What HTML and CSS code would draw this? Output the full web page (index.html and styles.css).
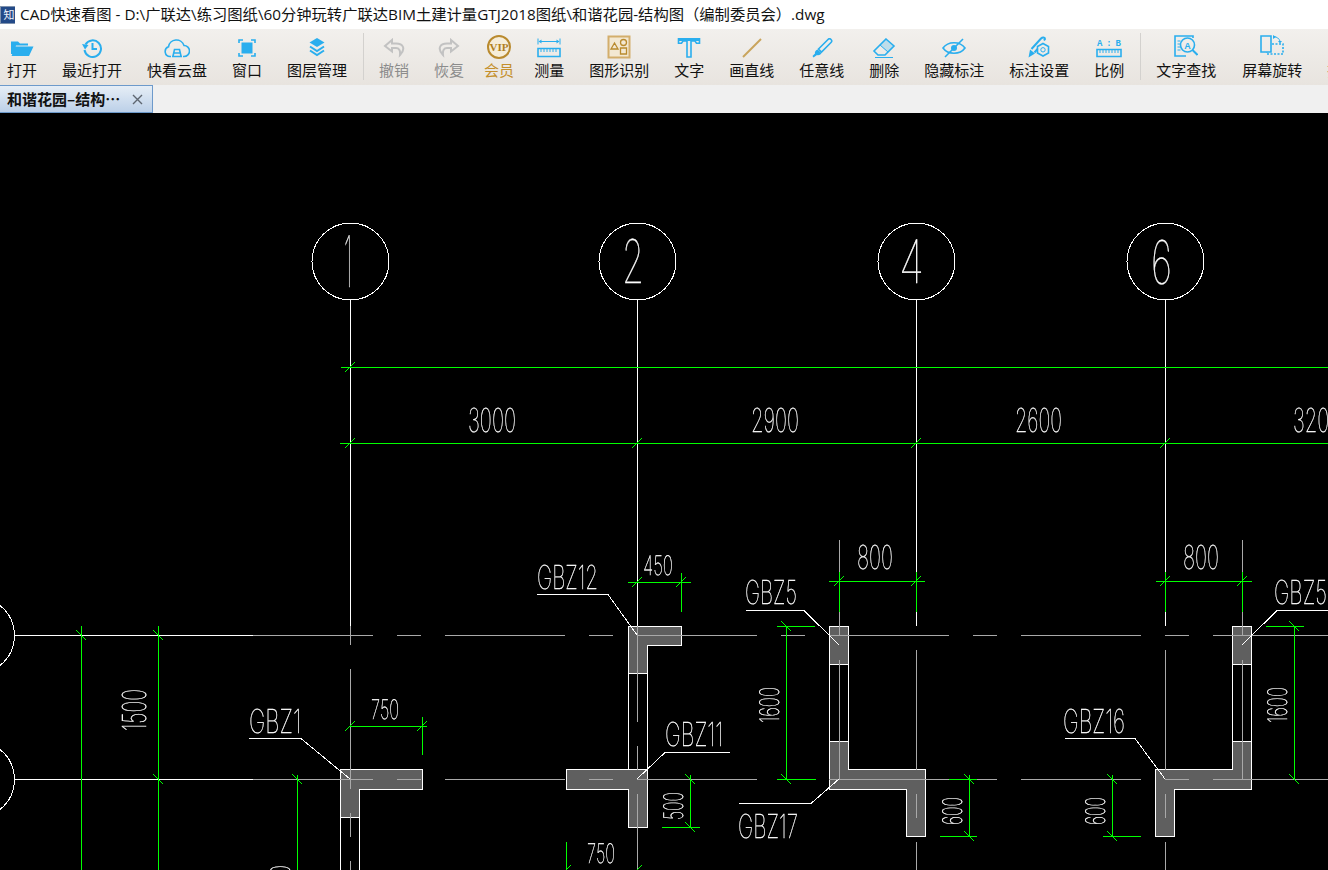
FILE: index.html
```html
<!DOCTYPE html>
<html lang="zh-CN">
<head>
<meta charset="utf-8">
<title>CAD快速看图</title>
<link rel="stylesheet" href="styles.css">
</head>
<body>
<div class="app">
  <header class="titlebar">
    <svg class="logo" viewBox="0 0 15 18"><rect width="15" height="18" fill="#7f92ad"/><rect x="1" y="1" width="14" height="16" fill="#234a88"/><text x="9" y="13" class="logo-t">知</text></svg>
    <span class="title">CAD快速看图 - D:\广联达\练习图纸\60分钟玩转广联达BIM土建计量GTJ2018图纸\和谐花园-结构图（编制委员会）.dwg</span>
  </header>

  <nav class="toolbar">
    <div class="tool">
      <svg class="ic" viewBox="0 0 24 20"><path class="f" d="M1 16V3.500h7l2 2h8v2H6L3 16zM1.500 18l4-9.500h18l-4.500 9.500z"/></svg>
      <span>打开</span>
    </div>
    <div class="tool">
      <svg class="ic" viewBox="0 0 24 20"><path class="s2" d="M5.500 6.500A8.300 8.300 0 1 1 4.500 12"/><path class="f" d="M2 6l6.500 1-3.500 4.500z"/><path class="s2" d="M12.500 5v6h4.500"/></svg>
      <span>最近打开</span>
    </div>
    <div class="tool">
      <svg class="ic wide" viewBox="0 0 26 20"><path class="s15" d="M7 18.500H6A5 5 0 0 1 4.500 8.800 8 8 0 0 1 20 7.500 5.500 5.500 0 0 1 20 18.500h-1"/><path class="s15" d="M8 18.500h10M9 18l1.500-6.500h5L17 18M9.500 15h7"/></svg>
      <span>快看云盘</span>
    </div>
    <div class="tool">
      <svg class="ic" viewBox="0 0 24 20"><path class="s15" d="M4 5V2h4M16 2h4v3M20 15v3h-4M8 18H4v-3"/><rect class="f" x="6.500" y="4.500" width="11" height="11"/></svg>
      <span>窗口</span>
    </div>
    <div class="tool">
      <svg class="ic" viewBox="0 0 24 20"><path class="f" d="M12 0l7.500 4.500L12 9 4.500 4.500z"/><path class="s2" d="M5 8.500L12 13l7-4.500M5 12.500L12 17l7-4.500"/></svg>
      <span>图层管理</span>
    </div>
    <div class="sep"></div>
    <div class="tool off">
      <svg class="ic" viewBox="0 0 24 20"><path class="g" d="M10 2L3 8l7 5.500V10h4c3 0 4.500 2.500 4 7 3-3 4-5 3-8-1-2.500-3.500-3.500-7-3.500h-4z"/></svg>
      <span>撤销</span>
    </div>
    <div class="tool off">
      <svg class="ic" viewBox="0 0 24 20"><path class="g" d="M14 2l7 6-7 5.500V10h-4c-3 0-4.500 2.500-4 7-3-3-4-5-3-8 1-2.500 3.500-3.500 7-3.500h4z"/></svg>
      <span>恢复</span>
    </div>
    <div class="tool vip">
      <svg class="ic big" viewBox="0 0 24 24"><circle cx="12" cy="12" r="11" class="vipc"/><text x="12" y="15.800" class="vipt" textLength="19" lengthAdjust="spacingAndGlyphs">VIP</text></svg>
      <span>会员</span>
    </div>
    <div class="tool tight">
      <svg class="ic" viewBox="0 0 24 20"><path class="s1" d="M1 .5v6M23 .5v6M3 3.500h18"/><path class="f" d="M1.500 3.500l3-2v4zM22.500 3.500l-3-2v4z"/><path class="s15" d="M1 10.500h22v8H1z"/><path class="s1" d="M4 11v3M7 11v3M10 11v3M13 11v3M16 11v3M19 11v3"/></svg>
      <span>测量</span>
    </div>
    <div class="tool">
      <svg class="ic big" viewBox="0 0 24 24"><rect x="1.500" y="1.500" width="21" height="21" class="gbox"/><circle cx="16.500" cy="7.500" r="3" class="gs"/><path class="gs" d="M4 14l3.500-6 3.500 6zM13.500 13h6v6h-6z"/></svg>
      <span>图形识别</span>
    </div>
    <div class="tool">
      <svg class="ic" viewBox="0 0 24 20"><path class="s15" d="M1.500.8h21v4.500h-3L18 3h-4v16h-4V3H6L4.500 5.300h-3z"/><path class="f" d="M2 1h20v2H2z"/></svg>
      <span>文字</span>
    </div>
    <div class="tool">
      <svg class="ic" viewBox="0 0 24 20"><path class="gl" d="M3 19L21 1"/></svg>
      <span>画直线</span>
    </div>
    <div class="tool">
      <svg class="ic" viewBox="0 0 24 20"><path class="s15" d="M8.500 11L18 1.500c1-1 2-1 3 0s1 2 0 3L11.500 14z"/><path class="f" d="M7.500 11.500l4 3.500c-1 2-3 2.500-4.500 2L3.500 19.500 2.500 18l2.500-2.500c-.5-1.500.5-3 2.500-4z"/></svg>
      <span>任意线</span>
    </div>
    <div class="tool">
      <svg class="ic" viewBox="0 0 24 20"><path class="s15" d="M14 1l8 7-9 9H6l-4-4z"/><path class="s1" d="M8 7l8 7M3 19.500h18"/><path class="hatch" d="M14 1l8 7-6 6-8-7z"/></svg>
      <span>删除</span>
    </div>
    <div class="tool">
      <svg class="ic" viewBox="0 0 24 20"><path class="s15" d="M1 10c5-7 17-7 22 0-5 7-17 7-22 0z"/><circle cx="12" cy="10" r="3" class="f"/><path class="s15" d="M3 19L21 1"/></svg>
      <span>隐藏标注</span>
    </div>
    <div class="tool">
      <svg class="ic big" viewBox="0 0 24 24"><path class="f" d="M1.500 22.500L3 14.500l5 4z"/><path class="s2" d="M4.500 14L14 3.500c1.500-1.500 4-1.500 4 .5l-1 1.500M7.500 17.500L10.500 14"/><path class="s15" d="M16 8.500l5.500 3v6.500L16 21l-5.500-3v-6.500z"/><circle cx="16" cy="14.800" r="2.200" class="s1"/></svg>
      <span>标注设置</span>
    </div>
    <div class="tool">
      <svg class="ic wide" viewBox="0 0 26 20"><text x="13" y="7.800" class="abt" textLength="24" lengthAdjust="spacing">A:B</text><path class="s15" d="M1 11.500h24v7H1z"/><path class="s1" d="M4 12v3M7 12v3M10 12v3M13 12v3M16 12v3M19 12v3M22 12v3"/></svg>
      <span>比例</span>
    </div>
    <div class="sep"></div>
    <div class="tool">
      <svg class="ic big" viewBox="0 0 24 24"><path class="s15" d="M19 3V1H1v20h11"/><path class="s1" d="M3.500 6h3M3.500 9h3M3.500 12h3M3.500 15h3"/><circle cx="13.500" cy="10" r="7" class="s15"/><path class="s2" d="M18.500 15l5 5"/><text x="13.500" y="13.500" class="at">A</text></svg>
      <span>文字查找</span>
    </div>
    <div class="tool rot">
      <svg class="ic big" viewBox="0 0 24 24"><path class="s15" d="M1 1h10v16H1z"/><path class="s15 dash" d="M12 9h11v10H7v-2"/><path class="s1" d="M14 1.500c3 .5 5 2 6 4.500"/><path class="f" d="M13 0v4l3-2zM18 6h4l-2 2.500z"/></svg>
      <span>屏幕旋转</span>
    </div>
    <div class="tool">
      <svg class="ic" viewBox="0 0 24 20"></svg>
      <span>批注</span>
    </div>
  </nav>

  <div class="tabbar">
    <div class="tab">
      <span class="tab-name">和谐花园–结构…</span>
      <svg class="tab-x" viewBox="0 0 11 11"><path d="M1 1l9 9M10 1l-9 9"/></svg>
    </div>
  </div>

  <main class="canvas">
    <svg class="drawing" viewBox="0 113 1328 757" width="1328" height="757">
      <!-- wall bodies -->
      <g class="wall">
        <path d="M340.500 769.500H422.500V789.500H359.500V817.500H340.500Z"/>
        <path d="M628.500 626.500H681.500V645.500H647.500V673.500H628.500Z"/>
        <path d="M566.500 769.500H647.500V827.500H628.500V789.500H566.500Z"/>
        <path d="M829.500 626.500H848.500V664.500H829.500Z"/>
        <path d="M829.500 741.500H848.500V769.500H925.500V836.500H906.500V789.500H829.500Z"/>
        <path d="M1232.500 626.500H1251.500V664.500H1232.500Z"/>
        <path d="M1232.500 741.500H1251.500V789.500H1174.500V836.500H1155.500V769.500H1232.500Z"/>
      </g>
      <path class="white" d="M340.500 817V870M359.500 817V870M628.500 673V769M647.500 673V769M829.500 664V741M848.500 664V741M1232.500 664V741M1251.500 664V741"/>

      <!-- axis centre lines -->
      <path class="axis" d="M253 635.500H373M397 635.500H421M445 635.500H565M589 635.500H613M637 635.500H757M781 635.500H805M829 635.500H949M973 635.500H997M1021 635.500H1141M1165 635.500H1189M1213 635.500H1328"/>
      <path class="axis" d="M253 779.500H373M397 779.500H421M445 779.500H565M589 779.500H613M637 779.500H757M781 779.500H805M829 779.500H949M973 779.500H997M1021 779.500H1141M1165 779.500H1189M1213 779.500H1328"/>
      <path class="axis" d="M350.500 626V645M350.500 669V789M350.500 813V837M350.500 861V870"/>
      <path class="axis" d="M637.500 626V722M637.500 746V770M637.500 794V870"/>
      <path class="axis" d="M916.500 650V770M916.500 794V818M916.500 842V870"/>
      <path class="axis" d="M1165.500 650V770M1165.500 794V818M1165.500 842V870"/>
      <path class="axis" d="M839.500 540V636M839.500 660V780"/>
      <path class="axis" d="M1242.500 540V636M1242.500 660V780"/>

      <!-- white extensions and bubbles -->
      <path class="white" d="M15 635.500H253M15 779.500H253M350.500 299V626M637.500 299V626M916.500 299V626M1165.500 299V626"/>
      <g class="white">
        <circle cx="350.500" cy="261.500" r="38.500"/>
        <circle cx="637.500" cy="261.500" r="38.500"/>
        <circle cx="916.500" cy="261.500" r="38.500"/>
        <circle cx="1165.500" cy="261.500" r="38.500"/>
        <path d="M0 605.500A38.500 38.500 0 0 1 0 665.500M0 749.500A38.500 38.500 0 0 1 0 809.500"/>
      </g>

      <!-- leaders -->
      <path class="white" d="M249 738.500H301L350 779M537 594.500H608L637 635M746 610.500H804L839 645M1277 610.500H1328M1277 610.500L1242 645M665 752.500H730M665 752.500L637 779M739 803.500H811L839 779M1065 738.500H1135L1165 779"/>

      <!-- dimensions -->
      <g class="dim">
        <path d="M341 367.500H1328M340 443.500H1328"/>
        <path d="M81.500 626V870M158.500 626V870M297.500 775V870"/>
        <path d="M350 726.500H427M422.500 717V755"/>
        <path d="M628 582.500H691M681.500 573V612"/>
        <path d="M829 581.500H925M839.500 572V612M916.500 572V612"/>
        <path d="M1156 581.500H1252M1165.500 572V612M1242.500 572V612"/>
        <path d="M777 626.500H815M777 779.500H816M786.500 626V779"/>
        <path d="M690.500 775V827M662 827.500H700"/>
        <path d="M949 779.500H977M969.500 775V836M940 836.500H977"/>
        <path d="M1266 626.500H1304M1294.500 626V779"/>
        <path d="M1112.500 775V836M1103 836.500H1141"/>
        <path d="M566.500 842V870"/>
      </g>
      <g class="dim">
        <path d="M345 372l10-10M345 448l10-10M632 448l10-10M911 448l10-10M1160 448l10-10"/>
        <path d="M345 731l10-10M417 731l10-10M632 587l10-10M676 587l10-10M834 586l10-10M911 586l10-10M1160 586l10-10M1237 586l10-10M561 875l10-10M632 875l10-10"/>
        <path d="M76 630l10 10M153 630l10 10M153 774l10 10M292 774l10 10M781 621l10 10M781 774l10 10M685 774l10 10M685 822l10 10M964 774l10 10M964 831l10 10M1289 621l10 10M1289 774l10 10M1107 774l10 10M1107 831l10 10"/>
      </g>

      <!-- text -->
      <g class="cad">
        <text x="344" y="287" font-size="71" textLength="8" lengthAdjust="spacingAndGlyphs">1</text>
        <text x="622" y="283" font-size="60" textLength="22" lengthAdjust="spacingAndGlyphs">2</text>
        <text x="899" y="283" font-size="60" textLength="25" lengthAdjust="spacingAndGlyphs">4</text>
        <text x="1151" y="284" font-size="60" textLength="21" lengthAdjust="spacingAndGlyphs">6</text>
        <text x="468" y="432" font-size="33" textLength="48" lengthAdjust="spacingAndGlyphs">3000</text>
        <text x="751" y="432" font-size="33" textLength="48" lengthAdjust="spacingAndGlyphs">2900</text>
        <text x="1015" y="432" font-size="33" textLength="47" lengthAdjust="spacingAndGlyphs">2600</text>
        <text x="1293" y="432" font-size="33" textLength="48" lengthAdjust="spacingAndGlyphs">3200</text>
        <text x="249" y="733" font-size="33" textLength="52" lengthAdjust="spacingAndGlyphs">GBZ1</text>
        <text x="371" y="719" font-size="27" textLength="28" lengthAdjust="spacingAndGlyphs">750</text>
        <text x="537" y="589" font-size="33" textLength="61" lengthAdjust="spacingAndGlyphs">GBZ12</text>
        <text x="643" y="575" font-size="27" textLength="30" lengthAdjust="spacingAndGlyphs">450</text>
        <text x="745" y="604" font-size="33" textLength="52" lengthAdjust="spacingAndGlyphs">GBZ5</text>
        <text x="857" y="569" font-size="33" textLength="36" lengthAdjust="spacingAndGlyphs">800</text>
        <text x="1183" y="569" font-size="33" textLength="36" lengthAdjust="spacingAndGlyphs">800</text>
        <text x="1274" y="604" font-size="33" textLength="53" lengthAdjust="spacingAndGlyphs">GBZ5</text>
        <text x="665" y="746" font-size="33" textLength="58" lengthAdjust="spacingAndGlyphs">GBZ11</text>
        <text x="738" y="838" font-size="33" textLength="60" lengthAdjust="spacingAndGlyphs">GBZ17</text>
        <text x="1063" y="733" font-size="33" textLength="62" lengthAdjust="spacingAndGlyphs">GBZ16</text>
        <text x="587" y="863" font-size="27" textLength="28" lengthAdjust="spacingAndGlyphs">750</text>
        <text transform="translate(146 731) rotate(-90)" font-size="33" textLength="42" lengthAdjust="spacingAndGlyphs">1500</text>
        <text transform="translate(779 723) rotate(-90)" font-size="27" textLength="36" lengthAdjust="spacingAndGlyphs">1600</text>
        <text transform="translate(1287 723) rotate(-90)" font-size="27" textLength="36" lengthAdjust="spacingAndGlyphs">1600</text>
        <text transform="translate(683 820) rotate(-90)" font-size="27" textLength="28" lengthAdjust="spacingAndGlyphs">500</text>
        <text transform="translate(962 825) rotate(-90)" font-size="27" textLength="28" lengthAdjust="spacingAndGlyphs">600</text>
        <text transform="translate(1105 825) rotate(-90)" font-size="27" textLength="28" lengthAdjust="spacingAndGlyphs">600</text>
        <text transform="translate(290 906) rotate(-90)" font-size="27" textLength="41" lengthAdjust="spacingAndGlyphs">1500</text>
      </g>
    </svg>
  </main>
</div>
</body>
</html>
```

FILE: styles.css
```css
* { box-sizing: border-box; }
html, body { margin: 0; padding: 0; height: 100%; overflow: hidden; background: #000; }
body { font-family: "Noto Sans CJK SC", "Noto Sans", sans-serif; color: #000; }
.app { width: 1328px; height: 870px; display: flex; flex-direction: column; overflow: hidden; }

.titlebar { height: 29px; flex: none; background: #fff; display: flex; align-items: center; gap: 5px; }
.logo { width: 15px; height: 18px; flex: none; margin-top: 1px; }
.logo-t { fill: #eef3fc; font: 400 11px "Noto Sans CJK SC", sans-serif; text-anchor: middle; }
.title { font-family: "Open Sans", "Noto Sans CJK SC", sans-serif; font-size: 15.3px; line-height: 29px; white-space: nowrap; color: #111; }

.toolbar { height: 56px; flex: none; background: linear-gradient(#f2f0ed, #e8e4df); display: flex; align-items: stretch; gap: 25px; padding-left: 7px; overflow: hidden; }
.tool { flex: none; display: flex; flex-direction: column; align-items: center; font-size: 15px; line-height: 20px; color: #111; padding-top: 5px; min-width: 30px; white-space: nowrap; }
.tool span { display: block; margin-top: 1px; width: 100%; text-align: center; }
.tool .ic { display: block; width: 24px; height: 20px; margin: 4px 0 1px; }
.tool .ic.wide { width: 26px; }
.tool .ic.big { width: 24px; height: 24px; margin: 1px 0 0; }
.sep { flex: none; width: 1px; margin: 4px -10px 5px -9px; background: #d3d1ce; }
.off { color: #8c8c8c; }
.vip { color: #c48f2c; margin-left: -5px; }
.tight { margin-left: -5px; }
.rot { margin-left: 1px; }

.f { fill: #2aaeee; stroke: none; }
.s1, .s15, .s2 { fill: none; stroke: #2aaeee; }
.s1 { stroke-width: 1; }
.s15 { stroke-width: 1.6; }
.s2 { stroke-width: 2; }
.dash { stroke-dasharray: 2 1.5; }
.g { fill: none; stroke: #c2c2c2; stroke-width: 2; }
.vipc { fill: #f6edd8; stroke: #b98a2e; stroke-width: 2; }
.vipt { fill: #b07f20; font: 700 10px "Liberation Serif", serif; text-anchor: middle; }
.gbox { fill: #f3e8d2; stroke: #d3ae6c; stroke-width: 2; }
.gs { fill: none; stroke: #b98a2e; stroke-width: 1.3; }
.gl { fill: none; stroke: #c9a45c; stroke-width: 2; }
.hatch { fill: #2aaeee; opacity: .25; stroke: none; }
.abt { fill: #2aaeee; font: 700 9px "Liberation Mono", monospace; text-anchor: middle; }
.at { fill: #2aaeee; font: 700 9px "Liberation Sans", sans-serif; text-anchor: middle; }

.tabbar { height: 28px; flex: none; background: #f0f0f0; display: flex; }
.tab { width: 153px; height: 28px; display: flex; align-items: center; justify-content: space-between; padding: 0 9px 2px 7px; border: 1px solid #6d9acb; border-left: 0; background: linear-gradient(#e6eef6, #bcd0e8); }
.tab-name { font-size: 15px; font-weight: 700; white-space: nowrap; color: #111; }
.tab-x { width: 11px; height: 11px; flex: none; margin-top: 2px; }
.tab-x path { fill: none; stroke: #5e6670; stroke-width: 1.4; }

.canvas { flex: 1; background: #000; overflow: hidden; }
.drawing { display: block; }
.wall path { fill: #5f5f5f; stroke: #fff; stroke-width: 1; shape-rendering: crispEdges; }
.white, .white circle, .white path { fill: none; stroke: #fff; stroke-width: 1; shape-rendering: crispEdges; }
.axis { fill: none; stroke: #a9a9a9; stroke-width: 1; shape-rendering: crispEdges; }
.dim path { fill: none; stroke: #00ff00; stroke-width: 1; shape-rendering: crispEdges; }
.cad { opacity: .999; }
.cad text { fill: #fff; stroke: #fff; stroke-width: .35; font-family: Inter, "Liberation Sans", sans-serif; font-weight: 100; text-rendering: geometricPrecision; }
```
